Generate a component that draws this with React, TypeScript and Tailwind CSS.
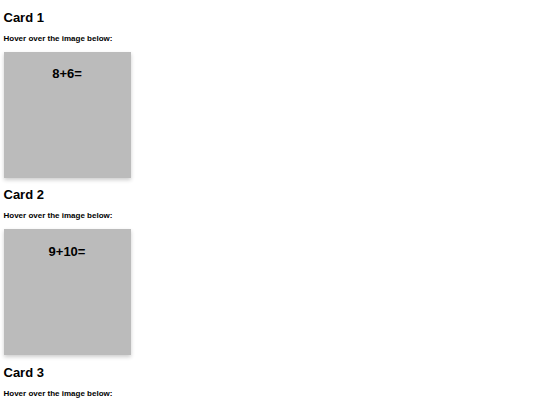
import React from 'react';

const cards = [
  { title: 'Card 1', sum: '8+6=' },
  { title: 'Card 2', sum: '9+10=' },
  { title: 'Card 3', sum: '' },
];

const App: React.FC = () => {
  return (
    <div className="min-h-screen bg-white pl-[3.5px] text-black" style={{ fontFamily: '"Liberation Sans", Arial, sans-serif' }}>
      {cards.map((c) => (
        <div key={c.title} className="pt-[9.5px]">
          <h2 className="text-[13px] leading-[15px] font-bold">{c.title}</h2>
          <p className="mt-[9px] text-[8px] leading-[9.2px] font-bold">Hover over the image below:</p>
          <div className="mt-[9px] w-[127px] h-[126px] bg-[#bbbbbb] shadow-[0_2px_4px_rgba(0,0,0,0.2)] pt-[9.5px] text-center">
            {c.sum && <span className="text-[13px] leading-[15px] font-bold">{c.sum}</span>}
          </div>
        </div>
      ))}
    </div>
  );
};

export default App;
